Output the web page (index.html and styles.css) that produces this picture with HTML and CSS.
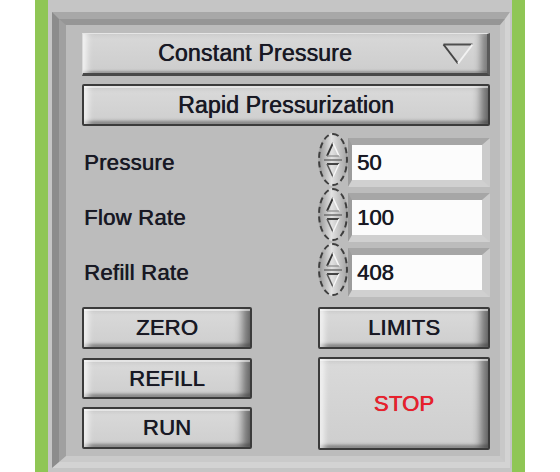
FILE: index.html
```html
<!DOCTYPE html>
<html>
<head>
<meta charset="utf-8">
<link rel="stylesheet" href="styles.css">
</head>
<body>
<div class="frame">
  <div class="bevel-outer">
    <div class="bevel-inner">
      <div class="panel">
        <div class="dropdown">
          <span class="dd-text">Constant Pressure</span>
          <svg class="dd-arrow" viewBox="0 0 32 22" width="32" height="22">
            <path d="M1.5 1.5 H30.5" stroke="#4f4f4f" stroke-width="2" fill="none"/>
            <path d="M1.5 1.5 L16 20.5" stroke="#454545" stroke-width="2" fill="none"/>
            <path d="M30.5 1.5 L16 20.5" stroke="#f2f2f2" stroke-width="2" fill="none"/>
          </svg>
        </div>
        <div class="btn rapid">Rapid Pressurization</div>
        <div class="rows">
          <div class="row">
            <span class="label">Pressure</span>
            <div class="numeric">
              <div class="spinner">
                <svg viewBox="0 0 20 46" width="20" height="46">
                  <path d="M1 23 H19" stroke="#6e6e6e" stroke-width="1.5"/>
                  <path d="M4 19 L10 6" stroke="#333" stroke-width="1.8" fill="none"/>
                  <path d="M10 6 L16 19" stroke="#f6f6f6" stroke-width="1.6" fill="none"/>
                  <path d="M4 19 H16" stroke="#8a8a8a" stroke-width="1.2"/>
                  <path d="M4 27 H16" stroke="#333" stroke-width="1.8"/>
                  <path d="M4 27 L10 40" stroke="#555" stroke-width="1.5" fill="none"/>
                  <path d="M16 27 L10 40" stroke="#f6f6f6" stroke-width="1.4" fill="none"/>
                </svg>
              </div>
              <div class="field-frame"><div class="field">50</div></div>
            </div>
          </div>
          <div class="row">
            <span class="label">Flow Rate</span>
            <div class="numeric">
              <div class="spinner">
                <svg viewBox="0 0 20 46" width="20" height="46">
                  <path d="M1 23 H19" stroke="#6e6e6e" stroke-width="1.5"/>
                  <path d="M4 19 L10 6" stroke="#333" stroke-width="1.8" fill="none"/>
                  <path d="M10 6 L16 19" stroke="#f6f6f6" stroke-width="1.6" fill="none"/>
                  <path d="M4 19 H16" stroke="#8a8a8a" stroke-width="1.2"/>
                  <path d="M4 27 H16" stroke="#333" stroke-width="1.8"/>
                  <path d="M4 27 L10 40" stroke="#555" stroke-width="1.5" fill="none"/>
                  <path d="M16 27 L10 40" stroke="#f6f6f6" stroke-width="1.4" fill="none"/>
                </svg>
              </div>
              <div class="field-frame"><div class="field">100</div></div>
            </div>
          </div>
          <div class="row">
            <span class="label">Refill Rate</span>
            <div class="numeric">
              <div class="spinner">
                <svg viewBox="0 0 20 46" width="20" height="46">
                  <path d="M1 23 H19" stroke="#6e6e6e" stroke-width="1.5"/>
                  <path d="M4 19 L10 6" stroke="#333" stroke-width="1.8" fill="none"/>
                  <path d="M10 6 L16 19" stroke="#f6f6f6" stroke-width="1.6" fill="none"/>
                  <path d="M4 19 H16" stroke="#8a8a8a" stroke-width="1.2"/>
                  <path d="M4 27 H16" stroke="#333" stroke-width="1.8"/>
                  <path d="M4 27 L10 40" stroke="#555" stroke-width="1.5" fill="none"/>
                  <path d="M16 27 L10 40" stroke="#f6f6f6" stroke-width="1.4" fill="none"/>
                </svg>
              </div>
              <div class="field-frame"><div class="field">408</div></div>
            </div>
          </div>
        </div>
        <div class="controls">
          <div class="col">
            <div class="btn zero">ZERO</div>
            <div class="btn refill">REFILL</div>
            <div class="btn run">RUN</div>
          </div>
          <div class="col">
            <div class="btn limits">LIMITS</div>
            <div class="btn stop">STOP</div>
          </div>
        </div>
      </div>
    </div>
  </div>
</div>
</body>
</html>
```
FILE: styles.css
```css
* { box-sizing: border-box; }
html, body { margin: 0; padding: 0; }
body {
  background: #ffffff;
  width: 560px;
  height: 472px;
  overflow: hidden;
  font-family: "Liberation Sans", Arial, sans-serif;
  color: #181824;
  text-shadow: 0.5px 0 0 currentColor, 0 0 1px rgba(0,0,0,.25);
}
.frame {
  margin-left: 35px;
  width: 490px;
  height: 472px;
  border-left: 13px solid #8fc655;
  border-right: 13px solid #8fc655;
  background: #c5c5c5;
  padding: 12px 2px 4px 4px;
}
.bevel-outer {
  height: 100%;
  border-style: solid;
  border-width: 7px 5px 6px 7px;
  border-color: #a8a8a8 #d3d3d3 #d3d3d3 #8c8c8c;
}
.bevel-inner {
  height: 100%;
  border-style: solid;
  border-width: 6px 5px 6px 7px;
  border-color: #969696 #c8c8c8 #cacaca #a0a0a0;
}
.panel {
  height: 100%;
  background: #bcbcbc;
  padding: 8px 10px 0 16px;
  display: flex;
  flex-direction: column;
}
.dropdown {
  height: 43px;
  display: flex;
  align-items: center;
  border-style: solid;
  border-width: 1px 3px 3px 1px;
  border-color: #e6e6e6 #5a5a5a #484848 #dadada;
  background: linear-gradient(#d8d8d8, #cdcdcd);
  box-shadow: inset 7px 0 6px -3px rgba(255,255,255,.75),
              inset -9px 0 7px -3px rgba(0,0,0,.4),
              inset 0 -3px 2px -1px rgba(0,0,0,.25);
}
.dd-text {
  flex: 1;
  text-align: center;
  font-size: 23px;
  letter-spacing: .2px;
}
.dd-arrow {
  margin: 0 13px 0 15px;
  flex: none;
}
.btn {
  display: flex;
  align-items: center;
  justify-content: center;
  border: 2px solid #3b3b3b;
  border-radius: 2px;
  background: linear-gradient(#dadada, #cecece);
  box-shadow: inset 0 2px 0 rgba(255,255,255,.5),
              inset 7px 0 6px -3px rgba(255,255,255,.75),
              inset -10px 0 8px -3px rgba(0,0,0,.5),
              inset 0 -4px 3px -1px rgba(0,0,0,.32);
  font-size: 22px;
  letter-spacing: .2px;
  color: #181824;
}
.rapid { height: 42px; margin-top: 8px; font-size: 23px; }
.rows { margin-top: 9px; display: flex; flex-direction: column; }
.row { height: 55px; display: flex; align-items: center; }
.label { font-size: 22px; letter-spacing: .3px; padding-left: 2px; }
.numeric { margin-left: auto; display: flex; align-items: center; }
.spinner {
  width: 30px;
  height: 53px;
  margin-top: -6px;
  border-radius: 50%;
  border: 2px dashed #3e3e3e;
  background: linear-gradient(90deg, #9c9c9c, #e2e2e2 45%, #a8a8a8);
  display: flex;
  align-items: center;
  justify-content: center;
  flex: none;
  text-shadow: none;
}
.field-frame {
  width: 142px;
  height: 49px;
  border-style: solid;
  border-width: 7px 8px 7px 4px;
  border-color: #a6a6a6 #cbcbcb #d0d0d0 #9c9c9c;
}
.field {
  height: 100%;
  background: #fcfcfc;
  font-size: 22px;
  padding-left: 5px;
  display: flex;
  align-items: center;
}
.controls {
  margin-top: 7px;
  display: grid;
  grid-template-columns: 170px 172px;
  column-gap: 66px;
}
.col { display: flex; flex-direction: column; }
.zero { height: 42px; }
.refill { height: 41px; margin-top: 9px; }
.run { height: 42px; margin-top: 8px; }
.limits { height: 42px; }
.stop { height: 93px; margin-top: 8px; color: #e8202c; }
```
